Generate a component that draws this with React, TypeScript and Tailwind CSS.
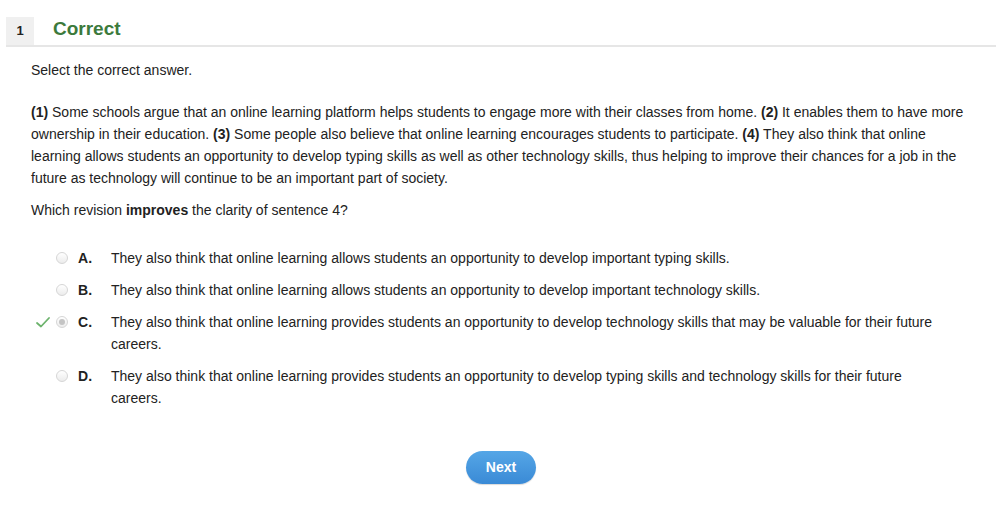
import React from 'react';

const options = [
  { key: 'A', text: 'They also think that online learning allows students an opportunity to develop important typing skills.' },
  { key: 'B', text: 'They also think that online learning allows students an opportunity to develop important technology skills.' },
  { key: 'C', text: 'They also think that online learning provides students an opportunity to develop technology skills that may be valuable for their future careers.', selected: true },
  { key: 'D', text: 'They also think that online learning provides students an opportunity to develop typing skills and technology skills for their future careers.' },
];

function Radio({ checked }: { checked?: boolean }) {
  return (
    <span className="w-[12px] h-[12px] rounded-full border border-[#d6d6d6] bg-gradient-to-b from-white to-[#ececec] flex items-center justify-center shrink-0">
      {checked && <span className="w-[6px] h-[6px] rounded-full bg-[#c4c4c4]" />}
    </span>
  );
}

function Check() {
  return (
    <svg width="14" height="11" viewBox="0 0 14 11" fill="none">
      <path d="M1 6 L5 9.5 L13 1" stroke="#6cb36c" strokeWidth="1.8" strokeLinecap="round" strokeLinejoin="round" />
    </svg>
  );
}

export default function App() {
  return (
    <div className="w-[1004px] h-[530px] bg-white text-[#222] font-['Liberation_Sans',Arial,sans-serif] pt-[17px] px-[6px]">
      {/* header */}
      <div className="flex items-stretch h-[30px] border-b-2 border-[#e6e6e6] mr-[2px]">
        <div className="w-[28px] bg-[#f0f0f0] flex items-center justify-center text-[13px] font-bold">1</div>
        <div className="pl-[19px] text-[19px] font-bold text-[#3c7a3c] leading-[24px]">Correct</div>
      </div>

      <div className="pl-[25px] pr-[30px] text-[14px] leading-[22px]">
        <p className="mt-[12px]">Select the correct answer.</p>

        <p className="mt-[20px]">
          <b>(1)</b> Some schools argue that an online learning platform helps students to engage more with their classes from home. <b>(2)</b> It enables them to have more ownership in their education. <b>(3)</b> Some people also believe that online learning encourages students to participate. <b>(4)</b> They also think that online learning allows students an opportunity to develop typing skills as well as other technology skills, thus helping to improve their chances for a job in the future as technology will continue to be an important part of society.
        </p>

        <p className="mt-[10px]">
          Which revision <b>improves</b> the clarity of sentence 4?
        </p>

        <div className="mt-[26px] flex flex-col gap-[10px]">
          {options.map((o) => (
            <div key={o.key} className="flex items-start">
              <div className="w-[25px] h-[22px] pl-[5px] flex items-center shrink-0">
                {o.selected && <Check />}
              </div>
              <div className="h-[22px] flex items-center w-[22px] shrink-0">
                <Radio checked={o.selected} />
              </div>
              <div className="w-[33px] font-bold shrink-0">{o.key}.</div>
              <div className="w-[830px]">{o.text}</div>
            </div>
          ))}
        </div>
      </div>

      <div className="flex justify-center mt-[42px]">
        <button className="w-[70px] h-[33px] rounded-full bg-gradient-to-b from-[#55a6e6] to-[#3a8ad6] text-white text-[14px] font-bold shadow-[0_1px_1px_rgba(0,0,0,0.15)] ml-[-2px]">
          Next
        </button>
      </div>
    </div>
  );
}
